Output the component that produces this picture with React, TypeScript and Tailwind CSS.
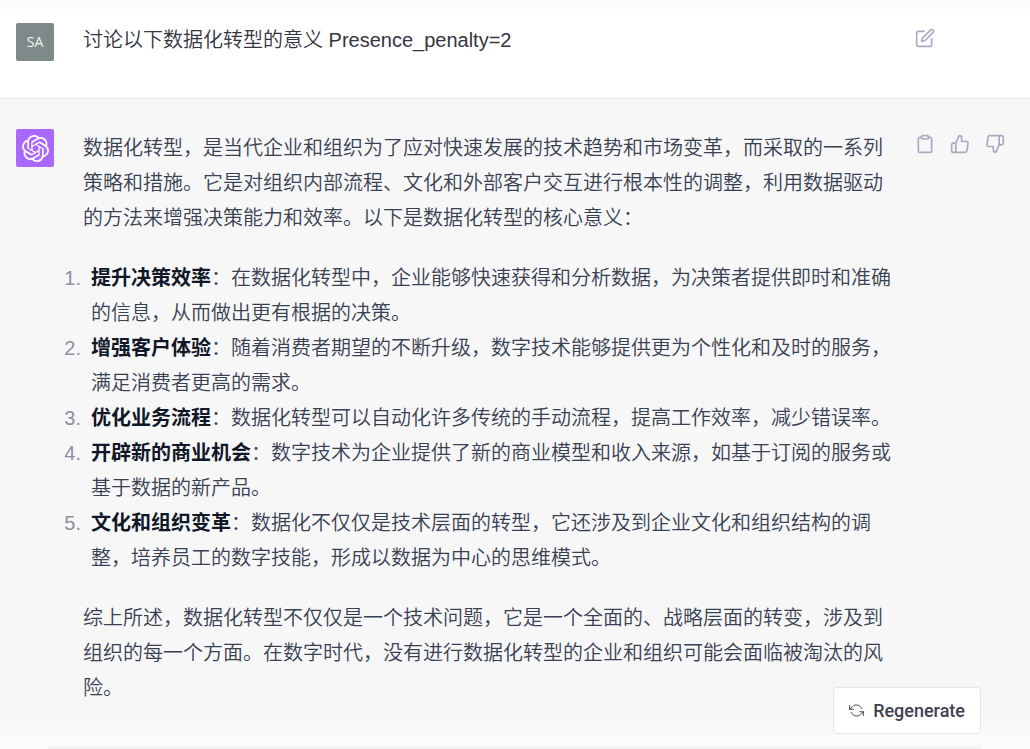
import type { ReactNode } from "react";
import {
  FiClipboard,
  FiEdit,
  FiRefreshCcw,
  FiThumbsDown,
  FiThumbsUp,
} from "react-icons/fi";
import { SiOpenai } from "react-icons/si";

interface Point {
  title: string;
  body: string;
}

const INTRO =
  "数据化转型，是当代企业和组织为了应对快速发展的技术趋势和市场变革，而采取的一系列策略和措施。它是对组织内部流程、文化和外部客户交互进行根本性的调整，利用数据驱动的方法来增强决策能力和效率。以下是数据化转型的核心意义：";

const POINTS: Point[] = [
  {
    title: "提升决策效率",
    body: "在数据化转型中，企业能够快速获得和分析数据，为决策者提供即时和准确的信息，从而做出更有根据的决策。",
  },
  {
    title: "增强客户体验",
    body: "随着消费者期望的不断升级，数字技术能够提供更为个性化和及时的服务，满足消费者更高的需求。",
  },
  {
    title: "优化业务流程",
    body: "数据化转型可以自动化许多传统的手动流程，提高工作效率，减少错误率。",
  },
  {
    title: "开辟新的商业机会",
    body: "数字技术为企业提供了新的商业模型和收入来源，如基于订阅的服务或基于数据的新产品。",
  },
  {
    title: "文化和组织变革",
    body: "数据化不仅仅是技术层面的转型，它还涉及到企业文化和组织结构的调整，培养员工的数字技能，形成以数据为中心的思维模式。",
  },
];

const SUMMARY =
  "综上所述，数据化转型不仅仅是一个技术问题，它是一个全面的、战略层面的转变，涉及到组织的每一个方面。在数字时代，没有进行数据化转型的企业和组织可能会面临被淘汰的风险。";

function IconButton({ label, children }: { label: string; children: ReactNode }) {
  return (
    <button
      type="button"
      aria-label={label}
      className="text-[#acaac2] transition-colors hover:text-gray-700"
    >
      {children}
    </button>
  );
}

function UserTurn() {
  return (
    <section className="flex items-start border-b border-black/7 bg-linear-to-b from-[#f9f9f9] to-white to-15% px-4 pt-[23px] pb-[37px] text-[#343541]">
      <div className="flex size-[38px] shrink-0 items-center justify-center rounded-xs bg-[#7d8a89] font-['Open_Sans',sans-serif] text-sm font-normal text-white/90">
        SA
      </div>
      <p className="ml-[29px] flex-1">讨论以下数据化转型的意义 Presence_penalty=2</p>
      <div className="mt-[5px] ml-5 flex w-[99px] shrink-0">
        <IconButton label="Edit message">
          <FiEdit size={20} />
        </IconButton>
      </div>
    </section>
  );
}

function AssistantTurn() {
  return (
    <section className="flex items-start px-4 pt-[30px] pb-8">
      <div className="flex size-[38px] shrink-0 items-center justify-center rounded-xs bg-[#ab68ff] text-white">
        <SiOpenai size={27} />
      </div>
      <div className="mt-0.5 ml-[29px] flex-1 space-y-[25px]">
        <p>{INTRO}</p>
        <ol>
          {POINTS.map((point, i) => (
            <li key={point.title} className="-ml-5 flex">
              <span className="w-[18px] shrink-0 text-right text-[#8e8ea0]">
                {i + 1}.
              </span>
              <p className="ml-2.5 flex-1">
                <strong className="font-bold text-gray-900">{point.title}</strong>
                ：{point.body}
              </p>
            </li>
          ))}
        </ol>
        <p>{SUMMARY}</p>
      </div>
      <div className="mt-[5px] ml-5 flex w-[99px] shrink-0 gap-[15px]">
        <IconButton label="Copy">
          <FiClipboard size={20} />
        </IconButton>
        <IconButton label="Good response">
          <FiThumbsUp size={20} />
        </IconButton>
        <IconButton label="Bad response">
          <FiThumbsDown size={20} />
        </IconButton>
      </div>
    </section>
  );
}

export default function App() {
  return (
    <main
      lang="zh-CN"
      className="relative min-h-screen overflow-hidden bg-[#f7f7f8] font-['Liberation_Sans','Noto_Sans_CJK_SC',sans-serif] text-xl leading-[35px] font-[350] text-[#374151]"
    >
      <UserTurn />
      <AssistantTurn />

      {/* Fade above the composer, with the top of its shadow */}
      <div className="pointer-events-none absolute inset-x-0 bottom-0 h-9 bg-linear-to-b from-white/0 to-white/70" />
      <div className="pointer-events-none absolute inset-x-12 bottom-0 h-1 bg-linear-to-b from-black/0 to-black/5" />

      <button
        type="button"
        className="absolute right-[49px] bottom-[15px] flex h-[47px] items-center gap-[9px] rounded border border-black/10 bg-white px-[15px] font-['Roboto',sans-serif] text-lg font-medium text-[#40414f] hover:bg-gray-50"
      >
        <FiRefreshCcw size={15} strokeWidth={1.5} />
        Regenerate
      </button>
    </main>
  );
}
